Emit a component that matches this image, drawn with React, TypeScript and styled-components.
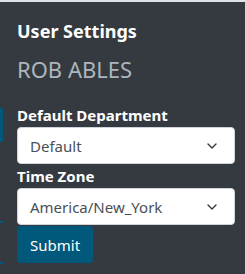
import React from "react";
import styled, { createGlobalStyle } from "styled-components";

const Global = createGlobalStyle`
  html, body { margin: 0; padding: 0; }
  body {
    background: #343a40;
    font-family: "Segoe UI", "Noto Sans", "Open Sans", sans-serif;
    width: 245px;
    height: 274px;
    overflow: hidden;
  }
`;

const Page = styled.div`
  position: relative;
  width: 245px;
  height: 274px;
  background: #343a40;
  border-top: 2px solid #dee2e6;
  box-sizing: border-box;
`;

const BackdropStrip = styled.div<{ $top: number; $height: number }>`
  position: absolute;
  left: 0;
  width: 3px;
  top: ${(p) => p.$top}px;
  height: ${(p) => p.$height}px;
  background: #00587a;
`;

const Panel = styled.div`
  display: flex;
  flex-direction: column;
  padding: 18px 10px 0 17px;
`;

const Title = styled.div`
  color: #ffffff;
  font-weight: 700;
  font-size: 18px;
  line-height: 22px;
`;

const UserName = styled.div`
  color: #adb5bd;
  font-size: 22px;
  line-height: 26px;
  margin-top: 14px;
  margin-bottom: 24px;
`;

const Label = styled.label`
  color: #ffffff;
  font-weight: 700;
  font-size: 15px;
  line-height: 18px;
  margin-bottom: 3px;
`;

const SelectBox = styled.div`
  display: flex;
  align-items: center;
  justify-content: space-between;
  height: 37px;
  box-sizing: border-box;
  background: #ffffff;
  border: 1px solid #ced4da;
  border-radius: 4px;
  padding: 0 17px 0 12px;
  color: #495057;
  font-size: 15px;
  margin-bottom: 3px;
`;

const Chevron = styled.svg`
  width: 10px;
  height: 6px;
  flex: none;
`;

const SubmitButton = styled.button`
  align-self: flex-start;
  height: 37px;
  margin-top: -2px;
  padding: 0 13px;
  background: #00587a;
  color: #ffffff;
  border: none;
  border-radius: 4px;
  font-family: inherit;
  font-size: 15px;
`;

const Select = ({ value }: { value: string }) => (
  <SelectBox>
    <span>{value}</span>
    <Chevron viewBox="0 0 10 6">
      <path d="M1 1l4 4 4-4" fill="none" stroke="#343a40" strokeWidth="1.4" strokeLinecap="round" strokeLinejoin="round" />
    </Chevron>
  </SelectBox>
);

export default function App() {
  return (
    <>
      <Global />
      <Page>
        <BackdropStrip $top={106} $height={34} />
        <BackdropStrip $top={219} $height={2} />
        <BackdropStrip $top={260} $height={2} />
        <Panel>
          <Title>User Settings</Title>
          <UserName>ROB ABLES</UserName>
          <Label>Default Department</Label>
          <Select value="Default" />
          <Label>Time Zone</Label>
          <Select value="America/New_York" />
          <SubmitButton>Submit</SubmitButton>
        </Panel>
      </Page>
    </>
  );
}
